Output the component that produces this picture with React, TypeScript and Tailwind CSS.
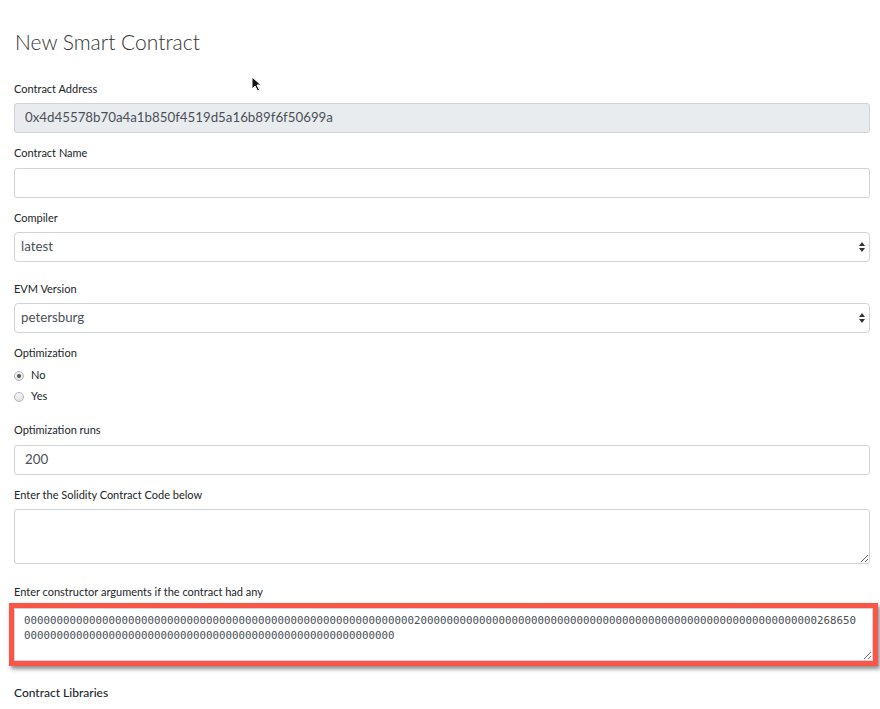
import React from "react";

const line1 = "0".repeat(60) + "2" + "0".repeat(61) + "268650";
const line2 = "0".repeat(57);

const Label = ({ children, className = "mb-[4px]" }: { children: React.ReactNode; className?: string }) => (
  <label className={`block text-[11px] leading-[20px] text-[#212529] ${className}`}>{children}</label>
);

const SelectArrows = () => (
  <svg width="8" height="12" viewBox="0 0 8 12" className="absolute right-[3px] top-1/2 -translate-y-1/2">
    <path d="M4 1 L7 5 L1 5 Z" fill="#333" />
    <path d="M4 11 L7 7 L1 7 Z" fill="#333" />
  </svg>
);

const FakeSelect = ({ value }: { value: string }) => (
  <div className="relative h-[30px] w-full rounded-[4px] border border-[#ced4da] bg-white flex items-center pl-[6px] text-[13.3px] text-[#495057]">
    {value}
    <SelectArrows />
  </div>
);

const Radio = ({ checked, label }: { checked?: boolean; label: string }) => (
  <div className="flex items-center h-[21px]">
    <span className="w-[10px] h-[10px] rounded-full border border-[#b5b5b5] bg-gradient-to-b from-[#f4f4f4] to-[#e2e2e2] flex items-center justify-center">
      {checked && <span className="w-[4px] h-[4px] rounded-full bg-[#555]" />}
    </span>
    <span className="ml-[7px] text-[11px] text-[#212529]">{label}</span>
  </div>
);

export default function App() {
  return (
    <div className="relative min-h-[709px] bg-white pl-[14px] pr-[10px] pt-[27px] font-['Lato',sans-serif]">
      {/* mouse cursor from the screenshot */}
      <svg width="12" height="17" viewBox="0 0 12 17" className="absolute left-[251px] top-[76px]">
        <path d="M1 1 L1 13 L4 10 L6.5 15 L8.5 14 L6 9 L10 9 Z" fill="#111" stroke="#fff" strokeWidth="1" />
      </svg>

      <h1 className="text-[21px] font-light text-[#333] leading-[30px] ml-[1px]">New Smart Contract</h1>

      <div className="mt-[22px]">
        <Label>Contract Address</Label>
        <div className="h-[30px] w-full rounded-[3px] border border-[#ced4da] bg-[#e9ecef] flex items-center pl-[10px] text-[13.3px] text-[#495057]">
          0x4d45578b70a4a1b850f4519d5a16b89f6f50699a
        </div>
      </div>

      <div className="mt-[10px]">
        <Label className="mb-[5px]">Contract Name</Label>
        <div className="h-[30px] w-full rounded-[3px] border border-[#ced4da] bg-white" />
      </div>

      <div className="mt-[10px]">
        <Label>Compiler</Label>
        <FakeSelect value="latest" />
      </div>

      <div className="mt-[17px]">
        <Label>EVM Version</Label>
        <FakeSelect value="petersburg" />
      </div>

      <div className="mt-[10px]">
        <Label className="mb-[2px]">Optimization</Label>
        <Radio checked label="No" />
        <Radio label="Yes" />
      </div>

      <div className="mt-[13px]">
        <Label className="mb-[5px]">Optimization runs</Label>
        <div className="h-[30px] w-full rounded-[3px] border border-[#ced4da] bg-white flex items-center pl-[10px] text-[13.3px] text-[#495057]">
          200
        </div>
      </div>

      <div className="mt-[10px]">
        <Label>Enter the Solidity Contract Code below</Label>
        <textarea readOnly className="block h-[55px] w-full rounded-[3px] border border-[#ced4da] bg-white outline-none" />
      </div>

      <div className="mt-[18px]">
        <Label className="mb-[1px]">Enter constructor arguments if the contract had any</Label>
        <div className="-ml-[5px] -mr-[8px] border-[5px] border-[#fb5547] shadow-[2px_3px_4px_rgba(0,0,0,0.45)]">
          <textarea
            readOnly
            value={line1 + "\n" + line2}
            className="block h-[53px] w-full resize-y border border-[#ced4da] bg-white pl-[9px] pt-[4px] text-[10.8px] leading-[15px] text-[#495057] font-['DejaVu_Sans_Mono',monospace] whitespace-pre overflow-hidden outline-none"
          />
        </div>
      </div>

      <div className="mt-[17px] text-[12px] font-medium text-[#212529] leading-[20px]">Contract Libraries</div>
    </div>
  );
}
